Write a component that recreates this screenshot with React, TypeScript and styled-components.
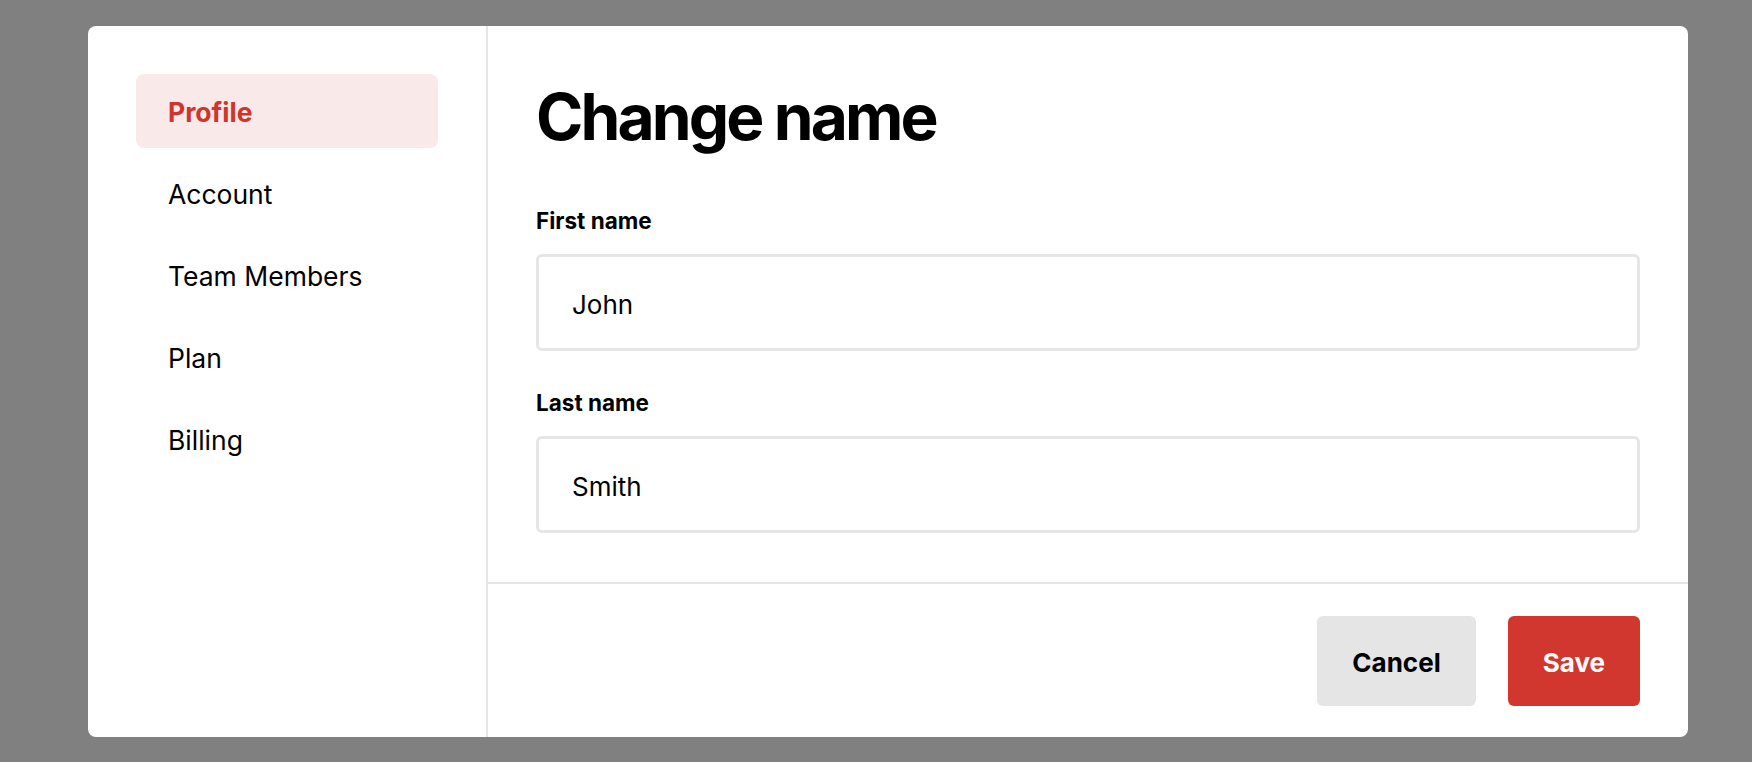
import React from "react";
import styled, { createGlobalStyle } from "styled-components";

const GlobalStyle = createGlobalStyle`
  html, body {
    margin: 0;
    padding: 0;
    background: #808080;
  }
  * { box-sizing: border-box; }
  body {
    font-family: Inter, "Liberation Sans", Arial, sans-serif;
    color: #000;
  }
`;

const Overlay = styled.div`
  height: 762px;
  padding: 26px 64px 25px 88px;
  background: #808080;
`;

const Modal = styled.div`
  width: 1600px;
  height: 711px;
  background: #ffffff;
  border-radius: 8px;
  display: flex;
  overflow: hidden;
`;

const Sidebar = styled.nav`
  width: 400px;
  flex-shrink: 0;
  padding: 48px;
  border-right: 2px solid #e6e6e6;
  display: flex;
  flex-direction: column;
  gap: 8px;
`;

const NavItem = styled.div<{ $active?: boolean }>`
  height: 74px;
  padding: 2px 0 0 32px;
  display: flex;
  align-items: center;
  border-radius: 8px;
  font-size: 26.5px;
  font-weight: ${(p) => (p.$active ? 700 : 400)};
  color: ${(p) => (p.$active ? "#d0352c" : "#000")};
  background: ${(p) => (p.$active ? "#fae9e9" : "transparent")};
`;

const Main = styled.div`
  flex: 1;
  display: flex;
  flex-direction: column;
`;

const Body = styled.div`
  flex: 1;
  padding: 48px 48px 0 48px;
  display: flex;
  flex-direction: column;
`;

const Title = styled.h1`
  margin: 0 0 48px 0;
  font-size: 64px;
  line-height: 86px;
  font-weight: 700;
  letter-spacing: -0.045em;
`;

const Fields = styled.div`
  display: flex;
  flex-direction: column;
  gap: 39px;
`;

const Field = styled.label`
  display: flex;
  flex-direction: column;
  gap: 20px;
`;

const Label = styled.span`
  font-size: 22.5px;
  line-height: 26px;
  font-weight: 700;
`;

const Input = styled.input`
  height: 97px;
  width: 100%;
  border: 3px solid #e6e6e6;
  border-radius: 6px;
  padding: 4px 0 0 33px;
  font-family: Inter, "Liberation Sans", Arial, sans-serif;
  font-size: 26px;
  color: #000;
  background: #fff;
  outline: none;
`;

const Footer = styled.div`
  border-top: 2px solid #e6e6e6;
  padding: 32px 48px 31px;
  display: flex;
  justify-content: flex-end;
  gap: 32px;
`;

const Button = styled.button<{ $primary?: boolean }>`
  height: 90px;
  padding: 2px 35px 0;
  border: none;
  border-radius: 6px;
  font-family: Inter, "Liberation Sans", Arial, sans-serif;
  font-size: 26px;
  font-weight: 700;
  cursor: pointer;
  background: ${(p) => (p.$primary ? "#d1372e" : "#e5e5e5")};
  color: ${(p) => (p.$primary ? "#ffffff" : "#000000")};
`;

const navItems = ["Profile", "Account", "Team Members", "Plan", "Billing"];

export default function App() {
  return (
    <>
      <GlobalStyle />
      <Overlay>
        <Modal>
          <Sidebar>
            {navItems.map((item) => (
              <NavItem key={item} $active={item === "Profile"}>
                {item}
              </NavItem>
            ))}
          </Sidebar>
          <Main>
            <Body>
              <Title>Change name</Title>
              <Fields>
                <Field>
                  <Label>First name</Label>
                  <Input defaultValue="John" />
                </Field>
                <Field>
                  <Label>Last name</Label>
                  <Input defaultValue="Smith" />
                </Field>
              </Fields>
            </Body>
            <Footer>
              <Button>Cancel</Button>
              <Button $primary>Save</Button>
            </Footer>
          </Main>
        </Modal>
      </Overlay>
    </>
  );
}
